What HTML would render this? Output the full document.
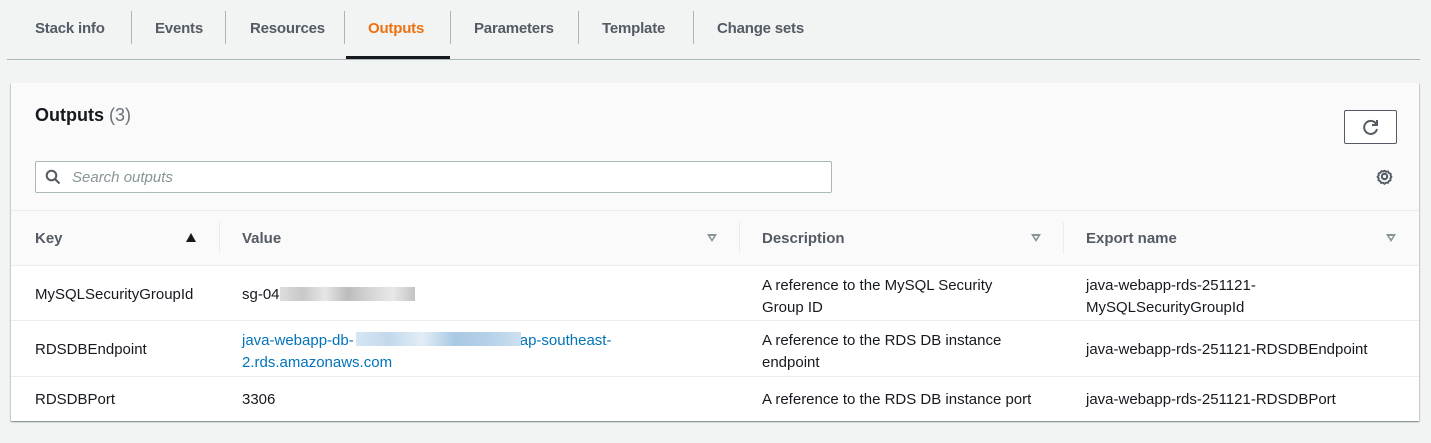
<!DOCTYPE html>
<html><head><meta charset="utf-8"><style>
*{margin:0;padding:0;box-sizing:border-box}
body{width:1431px;height:443px;background:#f2f3f3;font-family:"Liberation Sans",sans-serif;color:#16191f;position:relative;overflow:hidden;font-size:15px}
.a{position:absolute;white-space:nowrap}
.tab{position:absolute;top:20px;font-weight:bold;color:#545b64;font-size:15px;letter-spacing:-0.2px}
.sep{position:absolute;top:11px;width:1px;height:33px;background:#aab7b8}
.hsep{position:absolute;top:222px;width:1px;height:32px;background:#eaeded}
.hd{position:absolute;top:230px;font-weight:bold;color:#545b64;font-size:15px}
.row{position:absolute;left:11px;width:1408px;height:1px;background:#eaeded}
.tri{position:absolute;top:234px;width:0;height:0;border-left:5px solid transparent;border-right:5px solid transparent;border-top:8px solid #879596}
.tri::after{content:"";position:absolute;left:-2px;top:-6px;border-left:2px solid transparent;border-right:2px solid transparent;border-top:3px solid #fafafa}
.blur{position:absolute;height:14px}
</style></head><body>
<div class="tab" style="left:35px">Stack info</div>
<div class="sep" style="left:131px"></div>
<div class="tab" style="left:155px">Events</div>
<div class="sep" style="left:225px"></div>
<div class="tab" style="left:250px">Resources</div>
<div class="sep" style="left:344px"></div>
<div class="tab" style="left:368px;color:#ec7211">Outputs</div>
<div class="sep" style="left:450px"></div>
<div class="tab" style="left:474px">Parameters</div>
<div class="sep" style="left:578px"></div>
<div class="tab" style="left:602px">Template</div>
<div class="sep" style="left:693px"></div>
<div class="tab" style="left:717px">Change sets</div>
<div class="a" style="left:7px;top:59px;width:1413px;height:1px;background:#aab7b8"></div>
<div class="a" style="left:346px;top:56px;width:104px;height:3px;background:#16191f"></div>

<div class="a" style="left:11px;top:83px;width:1408px;height:338px;background:#fff;box-shadow:0 1px 1px rgba(0,28,36,.3),1px 1px 1px rgba(0,28,36,.15),-1px 1px 1px rgba(0,28,36,.15)"></div>
<div class="a" style="left:11px;top:83px;width:1408px;height:182px;background:#fafafa"></div>
<div class="a" style="left:35px;top:105px;font-size:18px;font-weight:bold">Outputs <span style="font-weight:normal;color:#687078">(3)</span></div>
<div class="a" style="left:1344px;top:110px;width:53px;height:34px;border:1px solid #545b64;border-radius:2px;background:#fff"></div>
<svg class="a" style="left:1361px;top:117px" width="20" height="20" viewBox="0 0 20 20"><path d="M15.5 7.5A6.5 6.5 0 1 0 16 12" fill="none" stroke="#545b64" stroke-width="2"/><path d="M16 3v5h-5" fill="none" stroke="#545b64" stroke-width="2"/></svg>
<div class="a" style="left:35px;top:161px;width:797px;height:32px;border:1px solid #aab7b8;border-radius:2px;background:#fff"></div>
<svg class="a" style="left:45px;top:169px" width="16" height="16" viewBox="0 0 16 16"><circle cx="6.5" cy="6.5" r="4.8" fill="none" stroke="#545b64" stroke-width="2"/><path d="M10 10l4.5 4.5" stroke="#545b64" stroke-width="2"/></svg>
<div class="a" style="left:72px;top:169px;font-style:italic;color:#879596;font-size:15px">Search outputs</div>
<svg class="a" style="left:1375px;top:167px" width="19" height="19" viewBox="0 0 20 20"><circle cx="10" cy="10" r="2.8" fill="none" stroke="#545b64" stroke-width="2.2"/><path d="M10 2.5l2 1.5 2.4-.6 1.2 2.2 2.4.9-.1 2.5L19 10.5l-1.6 1.9.4 2.5-2.3 1-1 2.3-2.5-.4L10 19.5l-1.9-1.6-2.5.4-1-2.3-2.3-1 .4-2.5L1 10.5l1.6-1.9L2.5 6l2.4-.9L6.1 3l2.4.6z" fill="none" stroke="#545b64" stroke-width="2.4" stroke-linejoin="round" transform="translate(10 10) scale(.82) translate(-10 -10)"/></svg>

<div class="row" style="top:210px"></div>
<div class="hd" style="left:35px">Key</div>
<div class="a" style="left:186px;top:233px;border-left:5.5px solid transparent;border-right:5.5px solid transparent;border-bottom:9px solid #16191f"></div>
<div class="hsep" style="left:219px"></div>
<div class="hd" style="left:242px">Value</div>
<div class="tri" style="left:707px"></div>
<div class="hsep" style="left:739px"></div>
<div class="hd" style="left:762px">Description</div>
<div class="tri" style="left:1031px"></div>
<div class="hsep" style="left:1063px"></div>
<div class="hd" style="left:1086px">Export name</div>
<div class="tri" style="left:1386px"></div>
<div class="row" style="top:265px"></div>

<div class="a" style="left:35px;top:286px">MySQLSecurityGroupId</div>
<div class="a" style="left:242px;top:286px">sg-04</div>
<div class="blur" style="left:280px;top:287px;width:135px;background:linear-gradient(90deg,#ddd,#c8c8c8,#e6e6e6,#bcbcbc,#d5d5d5,#e8e8e8,#c4c4c4)"></div>
<div class="a" style="left:762px;top:275px;line-height:22px">A reference to the MySQL Security<br>Group ID</div>
<div class="a" style="left:1086px;top:275px;line-height:22px">java-webapp-rds-251121-<br>MySQLSecurityGroupId</div>
<div class="row" style="top:320px"></div>

<div class="a" style="left:35px;top:341px">RDSDBEndpoint</div>
<div class="a" style="left:242px;top:330px;line-height:22px;color:#0073bb">java-webapp-db-<span style="display:inline-block;width:166px"></span>ap-southeast-<br>2.rds.amazonaws.com</div>
<div class="blur" style="left:356px;top:332px;width:165px;background:linear-gradient(90deg,#d6e6f3,#c2d9ec,#e2edf6,#a9c9e4,#b5d1e9,#cde0f0)"></div>
<div class="a" style="left:762px;top:330px;line-height:22px">A reference to the RDS DB instance<br>endpoint</div>
<div class="a" style="left:1086px;top:341px">java-webapp-rds-251121-RDSDBEndpoint</div>
<div class="row" style="top:376px"></div>

<div class="a" style="left:35px;top:391px">RDSDBPort</div>
<div class="a" style="left:242px;top:391px">3306</div>
<div class="a" style="left:762px;top:391px">A reference to the RDS DB instance port</div>
<div class="a" style="left:1086px;top:391px">java-webapp-rds-251121-RDSDBPort</div>
</body></html>
